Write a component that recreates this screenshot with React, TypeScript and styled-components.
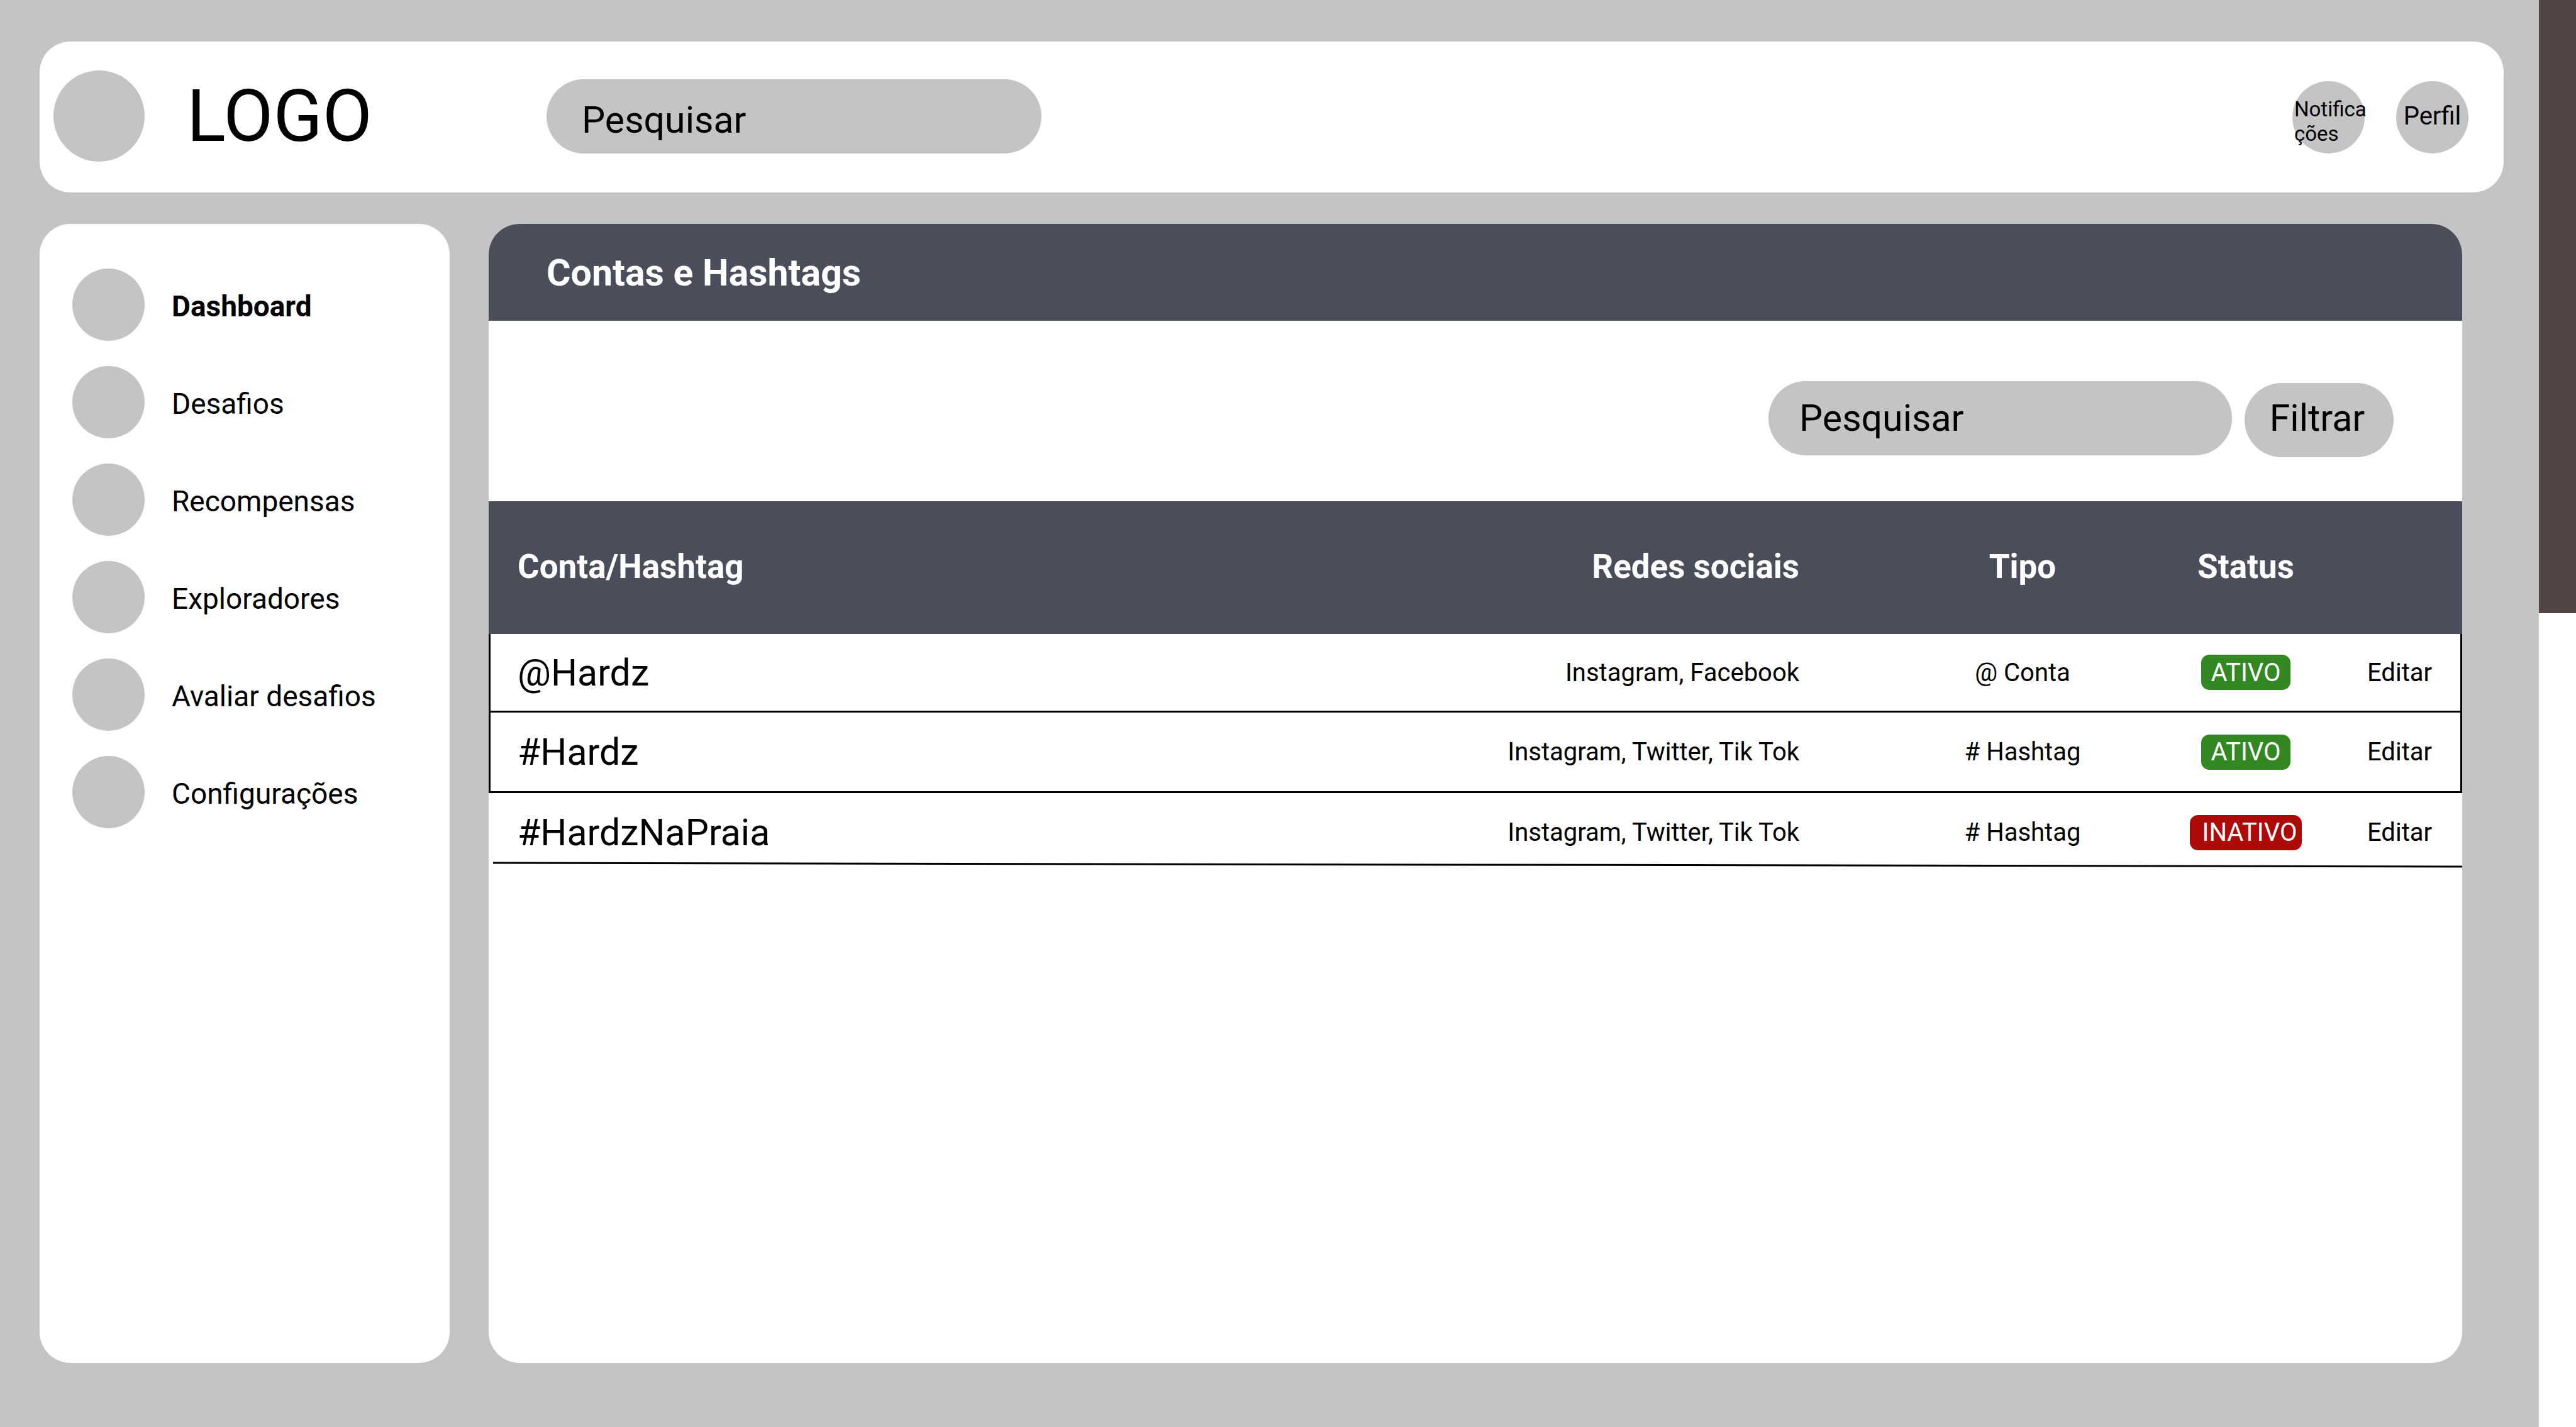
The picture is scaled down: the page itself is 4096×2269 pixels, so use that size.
import React from "react";
import styled, { createGlobalStyle, css } from "styled-components";

const color = {
  canvas: "#c4c4c4",
  surface: "#ffffff",
  dark: "#4a4e5a",
  ink: "#000000",
  strip: "#524543",
  active: "#338823",
  inactive: "#ad0a0a",
};

const GlobalStyle = createGlobalStyle`
  *, *::before, *::after { box-sizing: border-box; }
  body {
    margin: 0;
    background: ${color.surface};
    color: ${color.ink};
    font-family: Roboto, "Liberation Sans", sans-serif;
    font-size: 40px;
  }
  button, input { font: inherit; color: inherit; border: 0; }
  a { color: inherit; text-decoration: none; }
`;

const Screen = styled.div`
  display: flex;
  min-height: 100vh;
`;

const Frame = styled.div`
  flex: 1;
  min-width: 0;
  display: flex;
  flex-direction: column;
  gap: 50px;
  padding: 66px 56px 102px 63px;
  background: ${color.canvas};
`;

const Strip = styled.div`
  flex: none;
  width: 59px;
  height: 975px;
  background: ${color.strip};
`;

const Header = styled.header`
  display: flex;
  align-items: center;
  height: 240px;
  padding: 0 56px 0 22px;
  border-radius: 49px;
  background: ${color.surface};
`;

const HeaderMain = styled.div`
  flex: 1;
  display: flex;
  align-items: center;
  padding-bottom: 3px;
`;

const Brand = styled.a`
  display: flex;
  align-items: center;
  gap: 67px;
  width: 784px;
  font-size: 115px;
`;

const Disc = styled.span<{ $size: number }>`
  flex: none;
  width: ${(p) => p.$size}px;
  height: ${(p) => p.$size}px;
  border-radius: 50%;
  background: ${color.canvas};
`;

const pill = css`
  height: 118px;
  border-radius: 59px;
  background: ${color.canvas};
  font-size: 59px;
`;

const SearchInput = styled.input`
  ${pill}
  min-width: 0;
  outline-offset: 4px;
  &::placeholder {
    color: ${color.ink};
    opacity: 1;
  }
`;

const HeaderSearch = styled(SearchInput)`
  flex: 0 1 787px;
  padding: 12px 56px 0;
`;

const TableSearch = styled(SearchInput)`
  flex: 0 1 737px;
  padding: 0 49px 2px;
`;

const FilterButton = styled.button`
  ${pill}
  width: 237px;
  padding: 0 6px 8px 0;
  cursor: pointer;
`;

const Actions = styled.div`
  display: flex;
  gap: 50px;
`;

const RoundButton = styled.button<{ $compact?: boolean }>`
  display: flex;
  align-items: center;
  justify-content: ${(p) => (p.$compact ? "flex-start" : "center")};
  width: 115px;
  height: 115px;
  padding: ${(p) => (p.$compact ? "13px 0 0 3px" : "0 0 4px")};
  border-radius: 50%;
  background: ${color.canvas};
  font-size: ${(p) => (p.$compact ? 33 : 40)}px;
  line-height: ${(p) => (p.$compact ? 39 : 47)}px;
  text-align: left;
  cursor: pointer;
`;

const Body = styled.div`
  flex: 1;
  display: flex;
  gap: 62px;
  padding-right: 66px;
`;

const Sidebar = styled.nav`
  flex: none;
  width: 652px;
  padding: 71px 52px;
  border-radius: 49px;
  background: ${color.surface};
`;

const NavList = styled.ul`
  display: flex;
  flex-direction: column;
  gap: 40px;
  margin: 0;
  padding: 0;
  list-style: none;
`;

const NavLink = styled.a<{ $current: boolean }>`
  display: flex;
  align-items: center;
  gap: 43px;
  font-size: 46px;
  font-weight: ${(p) => (p.$current ? 700 : 400)};
`;

const NavLabel = styled.span`
  padding-top: 4px;
`;

const Panel = styled.main`
  flex: 1;
  min-width: 0;
  border-radius: 49px;
  overflow: hidden;
  background: ${color.surface};
`;

const PanelTitle = styled.h1`
  display: flex;
  align-items: center;
  height: 154px;
  margin: 0;
  padding: 0 92px;
  background: ${color.dark};
  color: ${color.surface};
  font-size: 59px;
  font-weight: 700;
`;

const Toolbar = styled.div`
  display: flex;
  justify-content: flex-end;
  align-items: baseline;
  gap: 20px;
  height: 287px;
  padding: 96px 109px 0;
`;

const Table = styled.table`
  width: 100%;
  table-layout: fixed;
  border-spacing: 0;
`;

const Col = styled.col<{ $width?: number }>`
  width: ${(p) => (p.$width ? `${p.$width}px` : "auto")};
`;

type Align = "left" | "center" | "right";

const HeadRow = styled.tr`
  height: 211px;
  background: ${color.dark};
  color: ${color.surface};
  font-size: 53px;
`;

const HeadCell = styled.th<{ $align: Align }>`
  padding: 0 ${(p) => (p.$align === "right" ? 179 : 0)}px 4px ${(p) => (p.$align === "left" ? 46 : 0)}px;
  font-weight: 700;
  text-align: ${(p) => p.$align};
`;

const Cell = styled.td<{ $align: Align }>`
  padding: 0 ${(p) => (p.$align === "right" ? 179 : 0)}px 0 0;
  text-align: ${(p) => p.$align};
`;

const NameCell = styled(Cell)`
  padding-left: 43px;
  border-left: 3px solid transparent;
  font-size: 59px;
`;

const EditCell = styled(Cell)`
  padding-left: 14px;
  border-right: 3px solid transparent;
`;

const Row = styled.tr<{ $boxed: boolean }>`
  height: 125px;
  &:nth-child(2) {
    height: 128px;
  }
  ${(p) =>
    p.$boxed &&
    css`
      & > td {
        border-color: ${color.ink};
        border-bottom: 3px solid ${color.ink};
      }
    `}
`;

const Badge = styled.span<{ $active: boolean }>`
  display: inline-flex;
  align-items: center;
  justify-content: center;
  vertical-align: middle;
  width: ${(p) => (p.$active ? 142 : 178)}px;
  height: 56px;
  padding-left: ${(p) => (p.$active ? 0 : 12)}px;
  border-radius: 13px;
  background: ${(p) => (p.$active ? color.active : color.inactive)};
  color: ${color.surface};
`;

const ClosingRule = styled.svg`
  display: block;
  width: 100%;
  height: 12px;
  margin-top: -17px;
  padding-left: 7px;
`;

const navItems = [
  "Dashboard",
  "Desafios",
  "Recompensas",
  "Exploradores",
  "Avaliar desafios",
  "Configurações",
];

const accounts = [
  { name: "@Hardz", networks: "Instagram, Facebook", kind: "@ Conta", active: true },
  { name: "#Hardz", networks: "Instagram, Twitter, Tik Tok", kind: "# Hashtag", active: true },
  { name: "#HardzNaPraia", networks: "Instagram, Twitter, Tik Tok", kind: "# Hashtag", active: false },
];

export default function App() {
  return (
    <>
      <GlobalStyle />
      <Screen>
        <Frame>
          <Header>
            <HeaderMain>
              <Brand href="#">
                <Disc $size={145} />
                LOGO
              </Brand>
              <HeaderSearch type="search" placeholder="Pesquisar" aria-label="Pesquisar" />
            </HeaderMain>
            <Actions>
              <RoundButton type="button" $compact>
                <span>
                  Notifica
                  <wbr />
                  ções
                </span>
              </RoundButton>
              <RoundButton type="button">Perfil</RoundButton>
            </Actions>
          </Header>
          <Body>
            <Sidebar>
              <NavList>
                {navItems.map((item, i) => (
                  <li key={item}>
                    <NavLink href="#" $current={i === 0} aria-current={i === 0 ? "page" : undefined}>
                      <Disc $size={115} />
                      <NavLabel>{item}</NavLabel>
                    </NavLink>
                  </li>
                ))}
              </NavList>
            </Sidebar>
            <Panel>
              <PanelTitle>Contas e Hashtags</PanelTitle>
              <Toolbar>
                <TableSearch type="search" placeholder="Pesquisar" aria-label="Pesquisar contas e hashtags" />
                <FilterButton type="button">Filtrar</FilterButton>
              </Toolbar>
              <Table>
                <colgroup>
                  <Col />
                  <Col $width={900} />
                  <Col $width={352} />
                  <Col $width={358} />
                  <Col $width={165} />
                </colgroup>
                <thead>
                  <HeadRow>
                    <HeadCell $align="left">Conta/Hashtag</HeadCell>
                    <HeadCell $align="right">Redes sociais</HeadCell>
                    <HeadCell $align="center">Tipo</HeadCell>
                    <HeadCell $align="center">Status</HeadCell>
                    <td />
                  </HeadRow>
                </thead>
                <tbody>
                  {accounts.map((account, i) => (
                    <Row key={account.name} $boxed={i < accounts.length - 1}>
                      <NameCell $align="left">{account.name}</NameCell>
                      <Cell $align="right">{account.networks}</Cell>
                      <Cell $align="center">{account.kind}</Cell>
                      <Cell $align="center">
                        <Badge $active={account.active}>{account.active ? "ATIVO" : "INATIVO"}</Badge>
                      </Cell>
                      <EditCell $align="left">
                        <a href="#">Editar</a>
                      </EditCell>
                    </Row>
                  ))}
                </tbody>
              </Table>
              <ClosingRule viewBox="0 0 100 12" preserveAspectRatio="none" aria-hidden="true">
                <line x1="0" y1="3" x2="100" y2="9" stroke={color.ink} strokeWidth="3" vectorEffect="non-scaling-stroke" />
              </ClosingRule>
            </Panel>
          </Body>
        </Frame>
        <Strip />
      </Screen>
    </>
  );
}
